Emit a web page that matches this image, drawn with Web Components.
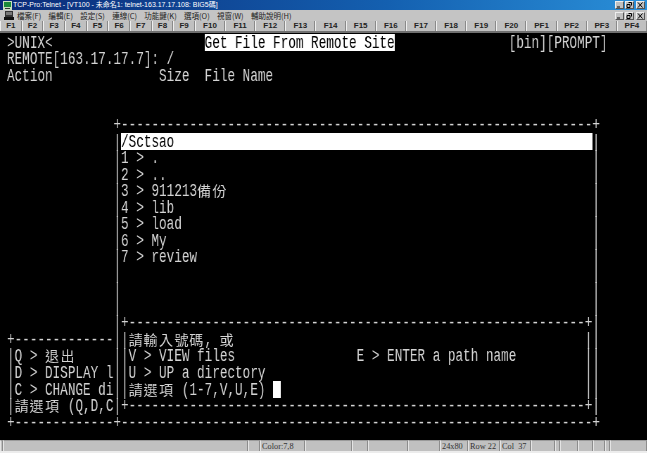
<!DOCTYPE html>
<html>
<head>
<meta charset="utf-8">
<title>TCP-Pro:Telnet</title>
<style>
  html, body { margin: 0; height: 100%; }
  body {
    width: 647px;
    height: 453px;
    overflow: hidden;
    background: #c0c0c0;
    display: flex;
    flex-direction: column;
  }
</style>
</head>
<body>
<app-titlebar>TCP-Pro:Telnet - [VT100 - 未命名1: telnet-163.17.17.108: BIG5碼]</app-titlebar>
<app-menubar>
  <span>檔案(F)</span><span>編輯(E)</span><span>設定(S)</span><span>連線(C)</span><span>功能鍵(K)</span><span>選項(O)</span><span>視窗(W)</span><span>輔助說明(H)</span>
</app-menubar>
<fkey-bar></fkey-bar>
<term-screen>
<term-row>&gt;UNIX&lt;                    <term-hl>Get File From Remote Site</term-hl>               [bin][PROMPT]</term-row>
<term-row>REMOTE[163.17.17.7]: /</term-row>
<term-row>Action              Size  File Name</term-row>
<term-row></term-row>
<term-row></term-row>
<term-row>              +<term-rule n="62"></term-rule>+</term-row>
<term-row edge="|" at="77">              |<term-hl cols="62">/Sctsao</term-hl></term-row>
<term-row edge="|" at="77">              |1 &gt; .</term-row>
<term-row edge="|" at="77">              |2 &gt; ..</term-row>
<term-row edge="|" at="77">              |3 &gt; 911213<term-wide>備份</term-wide></term-row>
<term-row edge="|" at="77">              |4 &gt; lib</term-row>
<term-row edge="|" at="77">              |5 &gt; load</term-row>
<term-row edge="|" at="77">              |6 &gt; My</term-row>
<term-row edge="|" at="77">              |7 &gt; review</term-row>
<term-row edge="|" at="77">              |</term-row>
<term-row edge="|" at="77">              |</term-row>
<term-row edge="|" at="77">              |</term-row>
<term-row edge="+|" at="76">              |+<term-rule n="60"></term-rule></term-row>
<term-row edge="||" at="76">+<term-rule n="13"></term-rule>||<term-wide>請輸入號碼</term-wide>, <term-wide>或</term-wide></term-row>
<term-row edge="||" at="76">|Q &gt; <term-wide>退出</term-wide>     ||V &gt; VIEW files                E &gt; ENTER a path name</term-row>
<term-row edge="||" at="76">|D &gt; DISPLAY l||U &gt; UP a directory</term-row>
<term-row edge="||" at="76">|C &gt; CHANGE di||<term-wide>請選項</term-wide> (1-7,V,U,E) <term-hl cols="1"></term-hl></term-row>
<term-row edge="+|" at="76">|<term-wide>請選項</term-wide> (Q,D,C|+<term-rule n="60"></term-rule></term-row>
<term-row>+<term-rule n="13"></term-rule>+<term-rule n="62"></term-rule>+</term-row>
</term-screen>
<status-bar>
  <span></span><span></span><span></span><span>Color:7,8</span><span></span><span></span><span></span><span></span>
  <span>24x80</span><span>Row 22</span><span>Col&nbsp;&nbsp;37</span><span></span><span></span><span></span><span></span><span></span><span></span><span></span>
</status-bar>

<script>
// window caption buttons, used on the title bar and on the menu bar
class WinButtons extends HTMLElement {
  constructor() {
    super();
    this.attachShadow({ mode: 'open' });
    this.shadowRoot.innerHTML = `
      <style>
        :host { display: flex; gap: 0; margin-right: 2px; }
        .b {
          width: 9px; height: 8px; background: #c0c0c0; margin-left: 1px;
          border: 1px solid; border-color: #eee #555 #555 #eee;
          box-sizing: border-box; display: block;
        }
        svg { display: block; width: 7px; height: 6px; }
      </style>
      <div class="b"><svg viewBox="0 0 7 6"><path d="M1 5h3" stroke="#000"/></svg></div>
      <div class="b" style="margin-right:1px"><svg viewBox="0 0 7 6"><path d="M2.5 .5h3v3M1 2.5h3v3H1z" stroke="#000" fill="none"/></svg></div>
      <div class="b"><svg viewBox="0 0 7 6"><path d="M1 .5l4.5 5M5.5 .5L1 5.5" stroke="#000" fill="none"/></svg></div>
    `;
  }
}
customElements.define('win-buttons', WinButtons);

class AppTitlebar extends HTMLElement {
  constructor() {
    super();
    this.attachShadow({ mode: 'open' });
    this.shadowRoot.innerHTML = `
      <style>
        :host {
          display: flex; align-items: center; height: 10px; flex: none;
          background: linear-gradient(90deg, #0a2a78 0%, #1460b0 60%, #2a8fd8 100%);
          color: #fff;
          font: 7px/10px "Liberation Sans", "Noto Sans CJK TC", sans-serif;
          white-space: nowrap;
        }
        svg { width: 9px; height: 9px; margin: 0 1px 0 3px; flex: none; }
        .t { flex: 1; overflow: hidden; }
      </style>
      <svg viewBox="0 0 9 9"><rect width="9" height="9" fill="#c8e0c0"/><rect x="1" y="1" width="7" height="5" fill="#1a8a3a"/><rect x="2" y="7" width="5" height="1" fill="#333"/></svg>
      <div class="t"><slot></slot></div>
      <win-buttons></win-buttons>
    `;
  }
}
customElements.define('app-titlebar', AppTitlebar);

class AppMenubar extends HTMLElement {
  constructor() {
    super();
    this.attachShadow({ mode: 'open' });
    this.shadowRoot.innerHTML = `
      <style>
        :host {
          display: flex; align-items: center; height: 11px; flex: none;
          background: #c4c4c4; color: #222;
          font: 7.5px/11px "Noto Sans CJK TC", "Liberation Sans", sans-serif;
          white-space: nowrap;
        }
        svg { width: 10px; height: 9px; margin: 0 3px 0 4px; flex: none; }
        .m { flex: 1; display: flex; gap: 7.3px; }
        ::slotted(span) { display: block; }
      </style>
      <svg viewBox="0 0 10 9"><rect x="1" width="8" height="6" fill="#333"/><rect x="2" y="1" width="6" height="3" fill="#777"/><rect y="6" width="10" height="3" fill="#111"/></svg>
      <div class="m"><slot></slot></div>
      <win-buttons></win-buttons>
    `;
  }
}
customElements.define('app-menubar', AppMenubar);

class FkeyBar extends HTMLElement {
  constructor() {
    super();
    this.attachShadow({ mode: 'open' });
    const keys = [];
    for (let i = 1; i <= 20; i++) keys.push('F' + i);
    for (let i = 1; i <= 4; i++) keys.push('PF' + i);
    this.shadowRoot.innerHTML = `
      <style>
        :host {
          display: grid; flex: none; height: 12px;
          grid-template-columns: repeat(9, 21.67px) repeat(15, 1fr);
          background: #c0c0c0; color: #222;
          font: bold 8px/10px "Liberation Sans", sans-serif;
          text-align: center;
          box-sizing: border-box;
          border-bottom: 2px solid #707070;
        }
        div { border-left: 1px solid #eee; border-right: 1px solid #8a8a8a; }
      </style>
      ${keys.map(k => `<div>${k}</div>`).join('')}
    `;
  }
}
customElements.define('fkey-bar', FkeyBar);

class TermScreen extends HTMLElement {
  constructor() {
    super();
    this.attachShadow({ mode: 'open' });
    this.shadowRoot.innerHTML = `
      <style>
        :host {
          display: block; flex: none; height: 407px; overflow: hidden;
          box-sizing: border-box; padding: 0.7px 0 0 7px;
          background: #000; color: #d4d4d4;
          font: 18px "Liberation Mono", "Noto Sans CJK TC", monospace;
        }
      </style>
      <slot></slot>
    `;
  }
}
customElements.define('term-screen', TermScreen);

// one line of the 80 column grid, squeezed to the narrow terminal cell
class TermRow extends HTMLElement {
  constructor() {
    super();
    this.attachShadow({ mode: 'open' });
    this.shadowRoot.innerHTML = `
      <style>
        :host {
          display: flex; height: 16.53px; width: 80ch;
          line-height: 18px; white-space: pre;
          transform: scaleX(0.7037); transform-origin: 0 0;
          will-change: transform;
        }
        .edge { flex: none; }
      </style>
      <div class="main"><slot></slot></div><div class="edge"></div>
    `;
  }
  connectedCallback() {
    const at = this.getAttribute('at');
    if (at) {
      this.shadowRoot.querySelector('.main').style.width = at + 'ch';
      this.shadowRoot.querySelector('.edge').textContent = this.getAttribute('edge');
    }
  }
}
customElements.define('term-row', TermRow);

// rows keep white-space: pre, so these shadow roots hold no stray newlines
class TermHl extends HTMLElement {
  constructor() {
    super();
    this.attachShadow({ mode: 'open' });
    this.shadowRoot.innerHTML = `<style>
        :host { display: inline-block; background: #fff; color: #000; height: 16.53px; vertical-align: top; }
      </style><slot></slot>`;
  }
  connectedCallback() {
    if (this.hasAttribute('cols')) this.style.width = this.getAttribute('cols') + 'ch';
  }
}
customElements.define('term-hl', TermHl);

// hyphens of a box edge
class TermRule extends HTMLElement {
  constructor() {
    super();
    this.attachShadow({ mode: 'open' });
  }
  connectedCallback() {
    this.shadowRoot.innerHTML = `<style>:host { display: inline; }</style>` + '-'.repeat(+this.getAttribute('n'));
  }
}
customElements.define('term-rule', TermRule);

// double width chinese text: two cells per character, undoing the row squeeze
class TermWide extends HTMLElement {
  constructor() {
    super();
    this.attachShadow({ mode: 'open' });
  }
  connectedCallback() {
    const chars = Array.from(this.textContent);
    this.shadowRoot.innerHTML = `<style>
        :host { display: inline; }
        .c { display: inline-block; width: 2ch; vertical-align: top; }
        .g {
          display: inline-block; font: 14px/16.53px "Noto Sans CJK TC", sans-serif;
          transform: scaleX(1.42); transform-origin: 0 0;
        }
      </style>` + chars.map(c => `<span class="c"><span class="g">${c}</span></span>`).join('');
  }
}
customElements.define('term-wide', TermWide);

class StatusBar extends HTMLElement {
  constructor() {
    super();
    this.attachShadow({ mode: 'open' });
    this.shadowRoot.innerHTML = `
      <style>
        :host {
          display: grid; flex: none; height: 13px; box-sizing: border-box;
          grid-template-columns: 3px 245px 12px 45px 47px 16px 40px 32px 28px 32px 31px 24px 5px 18px 15px 12px 5px 1fr;
          background: #c0c0c0; color: #333;
          font: 8.3px/11px "Liberation Serif", serif;
          border-bottom: 2px solid #ececec;
          white-space: nowrap;
        }
        ::slotted(span) {
          display: block; padding-left: 1px; overflow: hidden;
          border-left: 1px solid #e4e4e4; border-right: 1px solid #8c8c8c;
          border-top: 1px solid #9a9a9a;
        }
      </style>
      <slot></slot>
    `;
  }
}
customElements.define('status-bar', StatusBar);
</script>
</body>
</html>
